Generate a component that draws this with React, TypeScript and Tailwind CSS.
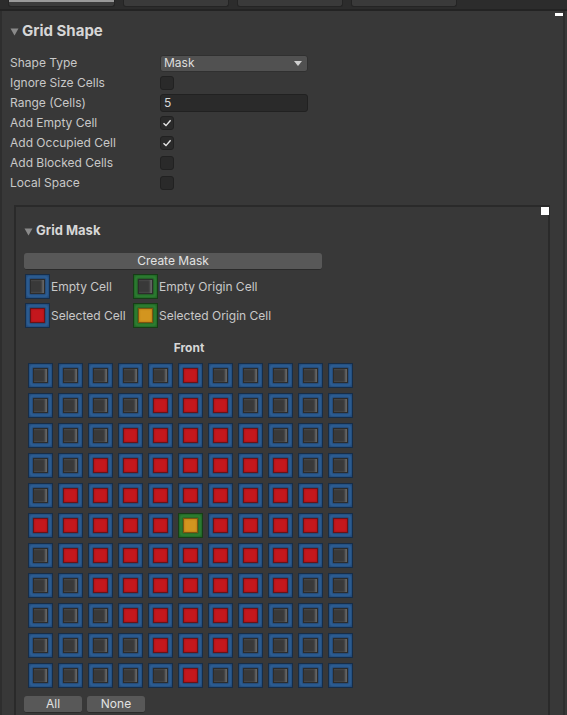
import React from "react";
import clsx from "clsx";

type CellKind = "empty" | "selected" | "originEmpty" | "originSelected";

// One cell of the mask grid
const Cell: React.FC<{ kind: CellKind }> = ({ kind }) => {
    const origin = kind === "originEmpty" || kind === "originSelected";
    const filled = kind === "selected" || kind === "originSelected";
    return (
        <div
            className={clsx(
                "flex size-[25px] shrink-0 items-center justify-center border",
                origin
                    ? "border-[#163d16] bg-[#33913a] shadow-[inset_0_0_3px_1px_#1f5c22]"
                    : "border-[#172d47] bg-[#356ca8] shadow-[inset_0_0_3px_1px_#1f4470]"
            )}
        >
            <div
                className={clsx(
                    "size-[15px] border",
                    filled
                        ? origin
                            ? "border-[#7d5410] bg-[#d3951f] shadow-[0_0_2px_1px_#2a5a20,inset_0_0_2px_#a06c12]"
                            : "border-[#6a1216] bg-[#c4171d] shadow-[0_0_2px_1px_#1f3f66,inset_0_0_2px_#931318]"
                        : origin
                          ? "border-[#2c2c2c] bg-[#393939] shadow-[0_0_2px_1px_#1f4a22,inset_-2px_0_2px_#666666]"
                          : "border-[#2c2c2c] bg-[#393939] shadow-[0_0_2px_1px_#1f3f66,inset_-2px_0_2px_#666666]"
                )}
            />
        </div>
    );
};

const Checkbox: React.FC<{ checked?: boolean }> = ({ checked }) => (
    <div className="flex size-[14px] items-center justify-center rounded-[3px] border border-[#212121] bg-[#2a2a2a]">
        {checked && (
            <svg width="10" height="10" viewBox="0 0 10 10">
                <path d="M1.5 5.2 L4 7.6 L8.6 2.2" fill="none" stroke="#e6e6e6" strokeWidth="1.4" />
            </svg>
        )}
    </div>
);

const Row: React.FC<{ label: string; children: React.ReactNode }> = ({ label, children }) => (
    <div className="flex h-[20px] items-center">
        <span className="w-[150px] text-[12px] text-[#c8c8c8]">{label}</span>
        {children}
    </div>
);

const Foldout: React.FC<{ title: string; size: string }> = ({ title, size }) => (
    <div className="flex h-[20px] items-center">
        <svg width="9" height="8" viewBox="0 0 9 8" className="mr-[3px] mt-[1px]">
            <path d="M0.5 0.5 H8.5 L4.5 7.5 Z" fill="#8a8a8a" />
        </svg>
        <span className={clsx("font-bold text-[#d6d6d6]", size)}>{title}</span>
    </div>
);

const SmallButton: React.FC<{ label: string; className?: string }> = ({ label, className }) => (
    <div
        className={clsx(
            "flex h-[17px] items-center justify-center rounded-[3px] border-b border-[#2a2a2a] bg-[#585858] text-[12px] text-[#e2e2e2]",
            className
        )}
    >
        {label}
    </div>
);

export default function App() {
    const size = 11;
    const mid = 5;

    return (
        <div
            className="relative flex h-[715px] w-[567px] flex-col overflow-hidden bg-[#383838]"
            style={{ fontFamily: "Inter, 'Liberation Sans', sans-serif" }}
        >
            {/* Tab strip */}
            <div className="flex h-[9px] shrink-0 gap-[8px] bg-[#2c2c2c] pl-[8px]">
                <div className="h-[7px] w-[107px] rounded-b-[3px] border-x border-b border-[#242424] bg-[#3c3c3c] shadow-[inset_0_2px_0_#9a9a9a]" />
                <div className="h-[7px] w-[106px] rounded-b-[3px] border-x border-b border-[#242424] bg-[#3a3a3a]" />
                <div className="h-[7px] w-[106px] rounded-b-[3px] border-x border-b border-[#242424] bg-[#3a3a3a]" />
                <div className="h-[7px] w-[106px] rounded-b-[3px] border-x border-b border-[#242424] bg-[#3a3a3a]" />
            </div>
            <div className="h-[2px] shrink-0 bg-[#232323]" />

            {/* Inspector */}
            <div className="mr-[2px] flex flex-1 border-l-[2px] border-r-[2px] border-[#2e2e2e]">
                <div className="flex flex-1 flex-col pl-[8px] pr-[9px] pt-[10px]">
                    <Foldout title="Grid Shape" size="text-[15px]" />

                    <div className="mt-[12px] flex flex-col">
                        <Row label="Shape Type">
                            <div className="flex h-[17px] w-[148px] items-center justify-between rounded-[3px] border border-[#303030] bg-[#515151] pl-[3px] pr-[5px] text-[12px] text-[#dedede]">
                                <span>Mask</span>
                                <svg width="8" height="5" viewBox="0 0 8 5">
                                    <path d="M0 0 H8 L4 5 Z" fill="#d0d0d0" />
                                </svg>
                            </div>
                        </Row>
                        <Row label="Ignore Size Cells">
                            <Checkbox />
                        </Row>
                        <Row label="Range (Cells)">
                            <div className="flex h-[18px] w-[148px] items-center rounded-[3px] border border-[#212121] bg-[#2a2a2a] pl-[3px] text-[12px] text-[#d8d8d8]">
                                5
                            </div>
                        </Row>
                        <Row label="Add Empty Cell">
                            <Checkbox checked />
                        </Row>
                        <Row label="Add Occupied Cell">
                            <Checkbox checked />
                        </Row>
                        <Row label="Add Blocked Cells">
                            <Checkbox />
                        </Row>
                        <Row label="Local Space">
                            <Checkbox />
                        </Row>
                    </div>

                    {/* Grid Mask box */}
                    <div className="ml-[4px] mt-[12px] flex w-[536px] flex-1 flex-col border-x-[2px] border-t-[2px] border-[#2a2a2a] pl-[8px] pt-[14px]">
                        <Foldout title="Grid Mask" size="text-[13px]" />

                        <SmallButton label="Create Mask" className="mt-[12px] w-[298px]" />

                        {/* Legend */}
                        <div className="mt-[4px] grid w-[300px] grid-cols-[108px_1fr] gap-y-[4px] pl-[1px] text-[12px] text-[#c8c8c8]">
                            <div className="flex items-center gap-[1px]">
                                <Cell kind="empty" />
                                <span>Empty Cell</span>
                            </div>
                            <div className="flex items-center gap-[1px]">
                                <Cell kind="originEmpty" />
                                <span>Empty Origin Cell</span>
                            </div>
                            <div className="flex items-center gap-[1px]">
                                <Cell kind="selected" />
                                <span>Selected Cell</span>
                            </div>
                            <div className="flex items-center gap-[1px]">
                                <Cell kind="originSelected" />
                                <span>Selected Origin Cell</span>
                            </div>
                        </div>

                        <div className="mt-[13px] w-[330px] text-center text-[12px] font-bold leading-[14px] text-[#d6d6d6]">
                            Front
                        </div>

                        {/* Mask grid */}
                        <div className="ml-[4px] mt-[8px] grid w-[325px] grid-cols-11 gap-[5px]">
                            {Array.from({ length: size * size }).map((_, i) => {
                                const r = Math.floor(i / size);
                                const c = i % size;
                                const on = Math.abs(r - mid) + Math.abs(c - mid) <= mid;
                                const kind: CellKind =
                                    r === mid && c === mid ? "originSelected" : on ? "selected" : "empty";
                                return <Cell key={i} kind={kind} />;
                            })}
                        </div>

                        <div className="mt-[8px] flex gap-[5px]">
                            <SmallButton label="All" className="w-[58px]" />
                            <SmallButton label="None" className="w-[58px]" />
                        </div>
                    </div>
                </div>
            </div>

            {/* Overlay markers */}
            <div className="absolute left-[555px] top-[13px] h-[3px] w-[8px] bg-white" />
            <div className="absolute left-[541px] top-[207px] size-[8px] bg-white" />
        </div>
    );
}
